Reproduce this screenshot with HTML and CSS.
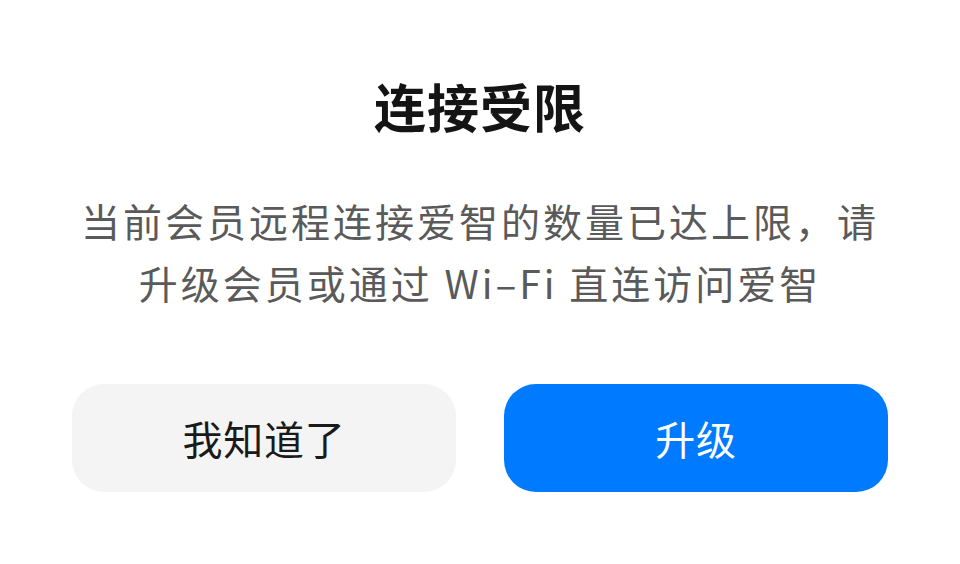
FILE: index.html
```html
<!DOCTYPE html>
<html lang="zh-CN">
<head>
<meta charset="utf-8">
<title>连接受限</title>
<link rel="stylesheet" href="styles.css">
</head>
<body>
<div class="dialog">
  <h1 class="title">连接受限</h1>
  <p class="message">当前会员远程连接爱智的数量已达上限，请<br>升级会员或通过 Wi–Fi 直连访问爱智</p>
  <div class="actions">
    <button class="btn btn-secondary">我知道了</button>
    <button class="btn btn-primary">升级</button>
  </div>
</div>
</body>
</html>
```

FILE: styles.css
```css
html, body {
  margin: 0;
  padding: 0;
  background: #ffffff;
}
body {
  width: 960px;
  height: 564px;
  font-family: "Noto Sans CJK SC", "Noto Sans", sans-serif;
}
.dialog {
  display: flex;
  flex-direction: column;
  align-items: center;
  padding: 80px 72px 0;
}
.title {
  margin: 0;
  font-size: 52px;
  line-height: 52px;
  font-weight: 600;
  color: #141414;
  letter-spacing: 1px;
}
.message {
  margin: 57px 0 0;
  font-size: 39px;
  line-height: 62px;
  color: #5a5a5a;
  text-align: center;
  letter-spacing: 3px;
}
.actions {
  margin-top: 71px;
  display: flex;
  gap: 48px;
  width: 100%;
}
.btn {
  flex: 1;
  height: 108px;
  border: none;
  border-radius: 32px;
  font-family: inherit;
  font-size: 40px;
  letter-spacing: 0.8px;
  padding: 0;
}
.btn-secondary {
  background: #f4f4f4;
  color: #1a1a1a;
}
.btn-primary {
  background: #007aff;
  color: #ffffff;
}
```
